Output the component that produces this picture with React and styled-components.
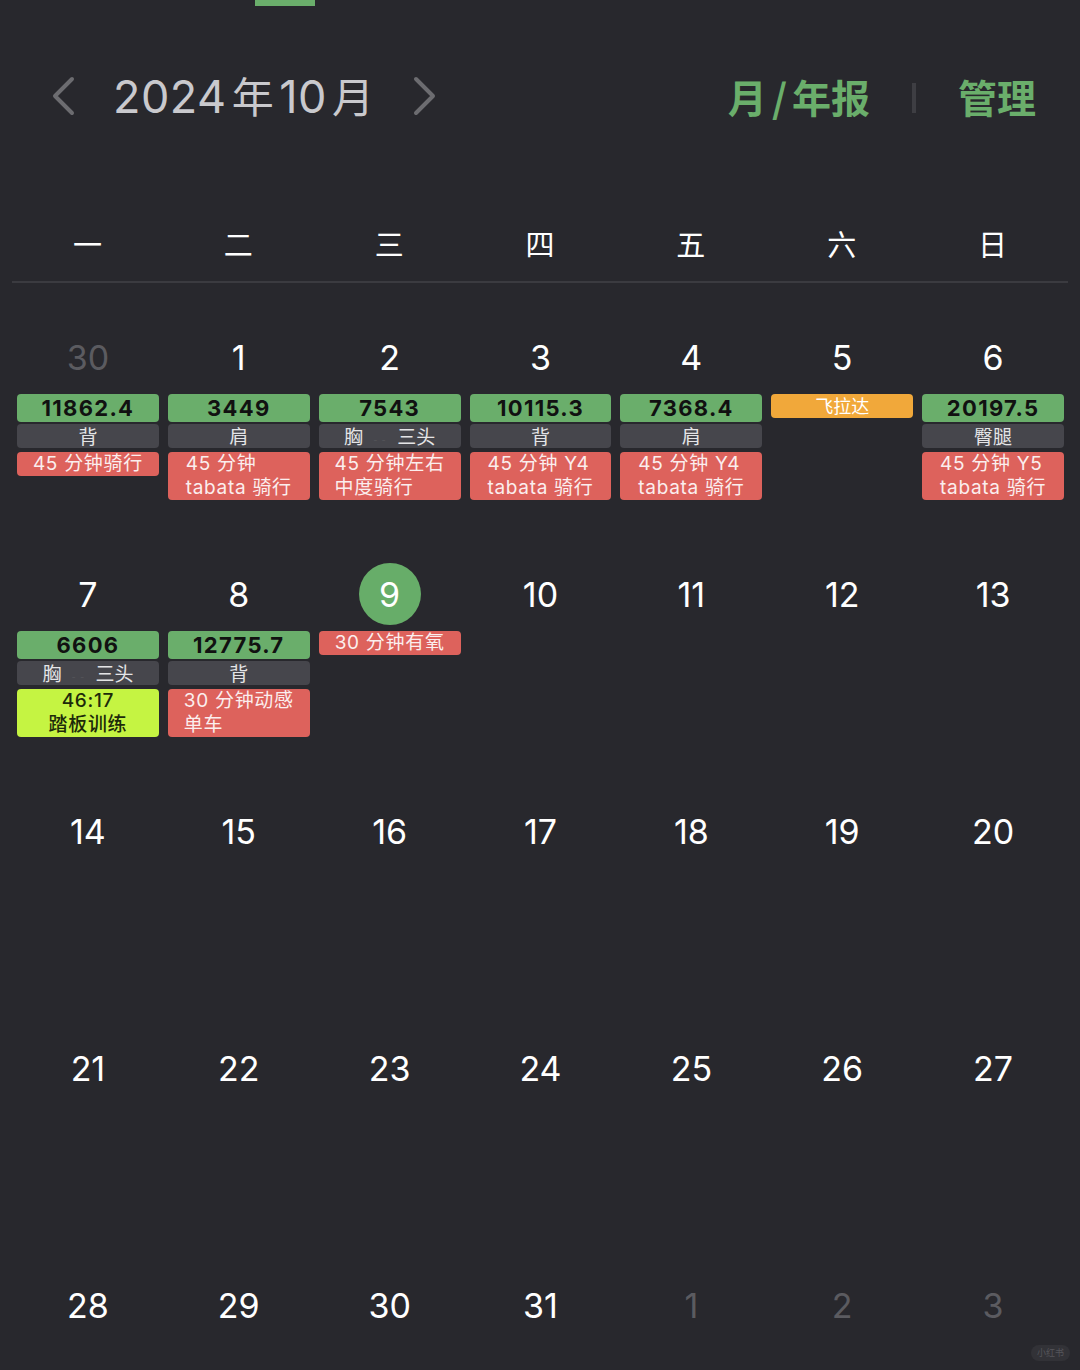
import React from "react";
import styled, { createGlobalStyle } from "styled-components";

const Global = createGlobalStyle`
  html, body { margin: 0; padding: 0; background: #28282d; }
  body { font-family: Inter, "Noto Sans CJK SC", sans-serif; }
`;

const Page = styled.div`
  position: relative;
  width: 1080px;
  height: 1370px;
  overflow: hidden;
  background: #28282d;
  color: #fff;
`;

const TopBar = styled.div`
  width: 60px;
  height: 6px;
  margin-left: 255px;
  background: #6aae6b;
`;

const Header = styled.div`
  height: 160px;
  box-sizing: border-box;
  padding: 66px 44px 0 50px;
  display: flex;
  align-items: flex-start;
  justify-content: space-between;
`;

const MonthNav = styled.div`
  display: flex;
  align-items: center;
  height: 48px;
`;

const Chevron = styled.svg`
  width: 26px;
  height: 40px;
  display: block;
`;

const Title = styled.div`
  display: flex;
  align-items: baseline;
  font-size: 45px;
  line-height: 48px;
  color: #c9c9cd;
  margin: 0 38px 0 37px;
  letter-spacing: 0.5px;
`;

const TitleCjk = styled.span`
  font-family: "Noto Sans CJK SC", sans-serif;
  font-size: 42px;
  margin: ${(p) => (p.$last ? "0 0 0 5px" : "0 5px 0 5px")};
`;

const Actions = styled.div`
  display: flex;
  align-items: center;
  height: 48px;
`;

const Action = styled.div`
  display: flex;
  align-items: center;
  font-family: "Noto Sans CJK SC", sans-serif;
  font-size: 39px;
  font-weight: 700;
  line-height: 48px;
  color: #6aae6b;
`;

const Slash = styled.span`
  margin: 0 5px;
`;

const Sep = styled.div`
  width: 4px;
  height: 30px;
  background: #3e3e43;
  margin: 4px 42px 0 42px;
`;

const WeekHead = styled.div`
  margin: 0 12px;
  display: grid;
  grid-template-columns: repeat(7, 1fr);
  padding: 57px 0 18px;
  border-bottom: 2px solid #3b3b40;
`;

const WeekDay = styled.div`
  text-align: center;
  font-family: "Noto Sans CJK SC", sans-serif;
  font-size: 29px;
  line-height: 40px;
  color: #fff;
`;

const Grid = styled.div`
  margin: 0 12px;
  padding-top: 37px;
  display: grid;
  grid-template-columns: repeat(7, 1fr);
  grid-auto-rows: 237px;
`;

const Cell = styled.div`
  padding: 0 4px 0 5px;
  display: flex;
  flex-direction: column;
  min-width: 0;
`;

const DateBox = styled.div`
  height: 74px;
  display: flex;
  align-items: center;
  justify-content: center;
`;

const DateNum = styled.div`
  width: 62px;
  height: 62px;
  border-radius: 50%;
  display: flex;
  align-items: center;
  justify-content: center;
  font-size: 34px;
  color: ${(p) => (p.$muted ? "#5b5b60" : "#fff")};
  background: ${(p) => (p.$today ? "#67ad69" : "transparent")};
`;

const Tags = styled.div`
  display: flex;
  flex-direction: column;
  gap: 2px;
`;

const WeightTag = styled.div`
  height: 28px;
  border-radius: 4px;
  background: #6aae6b;
  color: #111;
  font-size: 22px;
  font-weight: 700;
  line-height: 28px;
  text-align: center;
  letter-spacing: 1.3px;
`;

const PartTag = styled.div`
  height: 24px;
  border-radius: 4px;
  background: #46464c;
  color: #e4e4e6;
  font-family: "Noto Sans CJK SC", sans-serif;
  font-size: 19px;
  line-height: 24px;
  text-align: center;
`;

const Faint = styled.span`
  display: inline-block;
  width: 34px;
  text-align: center;
  color: #55555a;
  font-size: 11px;
  vertical-align: middle;
  letter-spacing: 1px;
`;

const CardioTag = styled.div`
  margin-top: ${(p) => (p.$first ? "0" : "2px")};
  border-radius: 4px;
  background: ${(p) => (p.$lime ? "#c5f442" : "#dd625c")};
  color: ${(p) => (p.$lime ? "#1d2a0a" : "#fbeeee")};
  font-size: 19px;
  line-height: 24px;
  text-align: center;
  font-weight: ${(p) => (p.$lime ? 500 : 400)};
  letter-spacing: 0.7px;
  white-space: nowrap;
`;

const CardioText = styled.span`
  display: inline-block;
  text-align: ${(p) => (p.$center ? "center" : "left")};
`;

const ClassTag = styled.div`
  height: 24px;
  border-radius: 4px;
  background: #f1a83a;
  color: #fff;
  font-family: "Noto Sans CJK SC", sans-serif;
  font-size: 18px;
  line-height: 23px;
  text-align: center;
`;

const Watermark = styled.div`
  position: absolute;
  right: 10px;
  bottom: 9px;
  padding: 1px 6px;
  border-radius: 9px;
  background: #323237;
  color: #55555a;
  font-family: "Noto Sans CJK SC", sans-serif;
  font-size: 9px;
  line-height: 14px;
`;

const weekdays = ["一", "二", "三", "四", "五", "六", "日"];

const chest = (
  <>
    胸<Faint>- -</Faint>三头
  </>
);

const data = {
  "30m": { weight: "11862.4", part: "背", cardio: ["45 分钟骑行"] },
  1: { weight: "3449", part: "肩", cardio: ["45 分钟", "tabata 骑行"] },
  2: { weight: "7543", part: chest, cardio: ["45 分钟左右", "中度骑行"] },
  3: { weight: "10115.3", part: "背", cardio: ["45 分钟 Y4", "tabata 骑行"] },
  4: { weight: "7368.4", part: "肩", cardio: ["45 分钟 Y4", "tabata 骑行"] },
  5: { cls: "飞拉达" },
  6: { weight: "20197.5", part: "臀腿", cardio: ["45 分钟 Y5", "tabata 骑行"] },
  7: { weight: "6606", part: chest, cardio: ["46:17", "踏板训练"], lime: true },
  8: { weight: "12775.7", part: "背", cardio: ["30 分钟动感", "单车"] },
  9: { cardio: ["30 分钟有氧"] },
};

const days = [
  { n: 30, key: "30m", muted: true },
  ...Array.from({ length: 31 }, (_, i) => ({ n: i + 1, key: i + 1 })),
  { n: 1, key: "n1", muted: true },
  { n: 2, key: "n2", muted: true },
  { n: 3, key: "n3", muted: true },
];

function Day({ d }) {
  const info = data[d.key];
  return (
    <Cell>
      <DateBox>
        <DateNum $muted={d.muted} $today={d.key === 9}>
          {d.n}
        </DateNum>
      </DateBox>
      {info && (
        <Tags>
          {info.weight && <WeightTag>{info.weight}</WeightTag>}
          {info.part && <PartTag>{info.part}</PartTag>}
          {info.cls && <ClassTag>{info.cls}</ClassTag>}
          {info.cardio && (
            <CardioTag $lime={info.lime} $first={!info.weight}>
              <CardioText $center={info.lime}>
                {info.cardio.map((l, i) => (
                  <div key={i}>{l}</div>
                ))}
              </CardioText>
            </CardioTag>
          )}
        </Tags>
      )}
    </Cell>
  );
}

export default function App() {
  return (
    <Page>
      <Global />
      <TopBar />
      <Header>
        <MonthNav>
          <Chevron viewBox="0 0 26 40">
            <path d="M22 3 L5 20 L22 37" fill="none" stroke="#6c6c70" strokeWidth="4" strokeLinecap="round" strokeLinejoin="round" />
          </Chevron>
          <Title>
            2024<TitleCjk>年</TitleCjk>10<TitleCjk $last>月</TitleCjk>
          </Title>
          <Chevron viewBox="0 0 26 40">
            <path d="M4 3 L21 20 L4 37" fill="none" stroke="#6c6c70" strokeWidth="4" strokeLinecap="round" strokeLinejoin="round" />
          </Chevron>
        </MonthNav>
        <Actions>
          <Action>
            月<Slash>/</Slash>年报
          </Action>
          <Sep />
          <Action>管理</Action>
        </Actions>
      </Header>
      <WeekHead>
        {weekdays.map((w) => (
          <WeekDay key={w}>{w}</WeekDay>
        ))}
      </WeekHead>
      <Grid>
        {days.map((d) => (
          <Day key={d.key} d={d} />
        ))}
      </Grid>
      <Watermark>小红书</Watermark>
    </Page>
  );
}
